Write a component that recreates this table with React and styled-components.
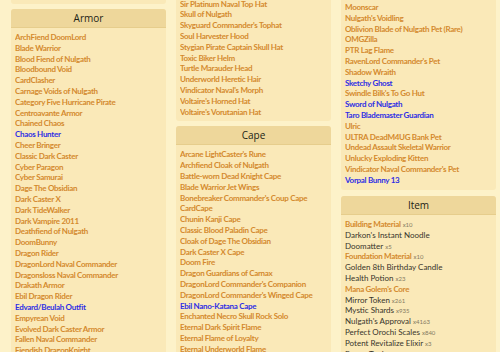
import React from 'react';
import styled, { createGlobalStyle } from 'styled-components';

const GlobalStyle = createGlobalStyle`
  html, body {
    margin: 0;
    padding: 0;
    background: #fdf2c9;
  }
  body {
    font-family: Lato, 'Open Sans', sans-serif;
  }
`;

const Page = styled.div`
  display: grid;
  grid-template-columns: repeat(3, 155px);
  column-gap: 10px;
  align-items: start;
  padding-left: 11px;
  height: 352px;
  overflow: hidden;
`;

const Column = styled.div`
  display: flex;
  flex-direction: column;
  gap: ${(p) => p.$gap}px;
  margin-top: ${(p) => p.$shift}px;
`;

const Card = styled.section`
  background: #fae9b8;
  border-radius: 3px;
  overflow: hidden;
`;

const CardHeader = styled.h2`
  margin: 0;
  height: 19px;
  display: flex;
  align-items: center;
  justify-content: center;
  background: #eed79b;
  border-bottom: 1px solid #e6cd8c;
  box-sizing: border-box;
  color: #221e15;
  font-family: 'Open Sans', sans-serif;
  font-size: 10px;
  font-weight: 500;
`;

const List = styled.ul`
  list-style: none;
  margin: 0;
  padding: 4px 4px 4px 4px;
`;

const toneColors = {
  gold: '#d48a2e',
  blue: '#2f2fe4',
  plain: '#38342b',
};

const Row = styled.li`
  font-size: 8px;
  line-height: 10.8px;
  height: 10.8px;
  white-space: nowrap;
  overflow: hidden;
  color: ${(p) => toneColors[p.$tone]};
  font-weight: ${(p) => (p.$tone === 'plain' ? 400 : 700)};
  letter-spacing: ${(p) => (p.$tone === 'plain' ? 0 : -0.3)}px;
`;

const Qty = styled.span`
  font-size: 6px;
  font-weight: 400;
  letter-spacing: 0;
  color: #857a62;
  margin-left: 2px;
`;

// * = blue entry, ! = plain entry
const parse = (list) =>
  list.map((raw) => {
    let tone = 'gold';
    let text = raw;
    if (raw.startsWith('*')) {
      tone = 'blue';
      text = raw.slice(1);
    } else if (raw.startsWith('!')) {
      tone = 'plain';
      text = raw.slice(1);
    }
    const [name, qty] = text.split('|');
    return { name, qty, tone };
  });

const armor = parse([
  'ArchFiend DoomLord',
  'Blade Warrior',
  'Blood Fiend of Nulgath',
  'Bloodbound Void',
  'CardClasher',
  'Carnage Voids of Nulgath',
  'Category Five Hurricane Pirate',
  'Centroavante Armor',
  'Chained Chaos',
  '*Chaos Hunter',
  'Cheer Bringer',
  'Classic Dark Caster',
  'Cyber Paragon',
  'Cyber Samurai',
  'Dage The Obsidian',
  'Dark Caster X',
  'Dark TideWalker',
  'Dark Vampire 2011',
  'Deathfiend of Nulgath',
  'DoomBunny',
  'Dragon Rider',
  'DragonLord Naval Commander',
  'Dragonsloss Naval Commander',
  'Drakath Armor',
  'Ebil Dragon Rider',
  '*Edvard/Beulah Outfit',
  'Empyrean Void',
  'Evolved Dark Caster Armor',
  'Fallen Naval Commander',
  'Fiendish DragonKnight',
]);

const hats = parse([
  'Sir Platinum Naval Top Hat',
  'Skull of Nulgath',
  "Skyguard Commander's Tophat",
  'Soul Harvester Hood',
  'Stygian Pirate Captain Skull Hat',
  'Toxic Biker Helm',
  'Turtle Marauder Head',
  'Underworld Heretic Hair',
  "Vindicator Naval's Morph",
  "Voltaire's Horned Hat",
  "Voltaire's Vorutanian Hat",
]);

const capes = parse([
  "Arcane LightCaster's Rune",
  'Archfiend Cloak of Nulgath',
  'Battle-worn Dead Knight Cape',
  'Blade Warrior Jet Wings',
  "Bonebreaker Commander's Coup Cape",
  'CardCape',
  'Chunin Kanji Cape',
  'Classic Blood Paladin Cape',
  'Cloak of Dage The Obsidian',
  'Dark Caster X Cape',
  'Doom Fire',
  'Dragon Guardians of Carnax',
  "DragonLord Commander's Companion",
  "DragonLord Commander's Winged Cape",
  '*Ebil Nano-Katana Cape',
  'Enchanted Necro Skull Rock Solo',
  'Eternal Dark Spirit Flame',
  'Eternal Flame of Loyalty',
  'Eternal Underworld Flame',
]);

const pets = parse([
  'Moonscar',
  "Nulgath's Voidling",
  'Oblivion Blade of Nulgath Pet (Rare)',
  'OMGZilla',
  'PTR Lag Flame',
  "RavenLord Commander's Pet",
  'Shadow Wraith',
  '*Sketchy Ghost',
  "Swindle Bilk's To Go Hut",
  '*Sword of Nulgath',
  '*Taro Blademaster Guardian',
  'Ulric',
  'ULTRA DeadM4UG Bank Pet',
  'Undead Assault Skeletal Warrior',
  'Unlucky Exploding Kitten',
  "Vindicator Naval Commander's Pet",
  '*Vorpal Bunny 13',
]);

const items = parse([
  'Building Material|x10',
  "!Darkon's Instant Noodle",
  '!Doomatter|x5',
  'Foundation Material|x10',
  '!Golden 8th Birthday Candle',
  '!Health Potion|x23',
  "Mana Golem's Core",
  '!Mirror Token|x261',
  '!Mystic Shards|x935',
  "!Nulgath's Approval|x4163",
  '!Perfect Orochi Scales|x840',
  '!Potent Revitalize Elixir|x3',
  '!Power Tonic|x7',
]);

function Section({ title, entries }) {
  return (
    <Card>
      {title && <CardHeader>{title}</CardHeader>}
      <List>
        {entries.map((e, i) => (
          <Row key={e.name + i} $tone={e.tone}>
            {e.name}
            {e.qty && <Qty>{e.qty}</Qty>}
          </Row>
        ))}
      </List>
    </Card>
  );
}

export default function App() {
  return (
    <>
      <GlobalStyle />
      <Page>
        <Column $shift={-4} $gap={5}>
          <Section entries={[]} />
          <Section title="Armor" entries={armor} />
        </Column>
        <Column $shift={-5.4} $gap={5}>
          <Section entries={hats} />
          <Section title="Cape" entries={capes} />
        </Column>
        <Column $shift={-2} $gap={6.5}>
          <Section entries={pets} />
          <Section title="Item" entries={items} />
        </Column>
      </Page>
    </>
  );
}
